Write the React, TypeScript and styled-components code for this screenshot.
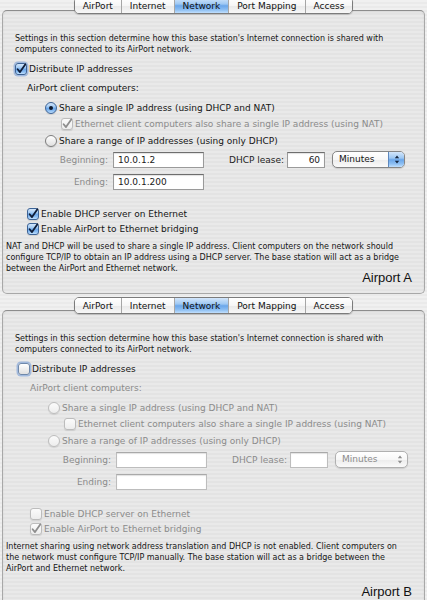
import React from "react";
import styled, { createGlobalStyle } from "styled-components";

const TABS = ["AirPort", "Internet", "Network", "Port Mapping", "Access"];
const ACTIVE_TAB = "Network";

const INTRO = [
  "Settings in this section determine how this base station's Internet connection is shared with",
  "computers connected to its AirPort network.",
];

type PanelData = {
  caption: string;
  tabsTop: number;
  nudge: number;
  captionTop: number;
  on: boolean;
  ethernetNat: boolean;
  beginning: string;
  ending: string;
  lease: string;
  dhcpServer: boolean;
  bridging: boolean;
  note: string[];
};

const PANELS: PanelData[] = [
  {
    caption: "Airport A",
    tabsTop: -3,
    nudge: 0,
    captionTop: -4,
    on: true,
    ethernetNat: true,
    beginning: "10.0.1.2",
    ending: "10.0.1.200",
    lease: "60",
    dhcpServer: true,
    bridging: true,
    note: [
      "NAT and DHCP will be used to share a single IP address. Client computers on the network should",
      "configure TCP/IP to obtain an IP address using a DHCP server. The base station will act as a bridge",
      "between the AirPort and Ethernet network.",
    ],
  },
  {
    caption: "Airport B",
    tabsTop: 3,
    nudge: 3,
    captionTop: 10,
    on: false,
    ethernetNat: false,
    beginning: "",
    ending: "",
    lease: "",
    dhcpServer: false,
    bridging: true,
    note: [
      "Internet sharing using network address translation and DHCP is not enabled. Client computers on",
      "the network must configure TCP/IP manually. The base station will act as a bridge between the",
      "AirPort and Ethernet network.",
    ],
  },
];

const AQUA =
  "linear-gradient(#d3e6fb 0%, #9ec8f3 40%, #6aa6ea 52%, #8fc0f3 80%, #c2e0fd 100%)";

const GlobalStyle = createGlobalStyle`
  html, body {
    margin: 0;
    padding: 0;
  }
  body {
    background: repeating-linear-gradient(#f0f0f0 0 2px, #eaeaea 2px 4px);
    font-family: "DejaVu Sans", "Liberation Sans", sans-serif;
    color: #151515;
  }
`;

const Page = styled.div`
  display: flex;
  flex-direction: column;
  width: 427px;
  height: 600px;
  overflow: hidden;
`;

const Section = styled.section`
  display: flex;
  flex-direction: column;
`;

const TabBar = styled.div<{ $top: number }>`
  position: relative;
  z-index: 1;
  align-self: center;
  display: flex;
  box-sizing: border-box;
  height: 17px;
  margin-top: ${(p) => p.$top}px;
  border: 1px solid #7b7b7b;
  border-radius: 5px;
  overflow: hidden;
  box-shadow: 0 1px 1px rgba(0, 0, 0, 0.18);
`;

const Tab = styled.div<{ $active?: boolean }>`
  display: flex;
  align-items: center;
  padding: 0 8px;
  font-size: 9px;
  color: #111;
  white-space: nowrap;
  background: ${(p) =>
    p.$active
      ? AQUA
      : "linear-gradient(#ffffff 0%, #f6f6f6 50%, #e9e9e9 52%, #f7f7f7 100%)"};
  & + & {
    border-left: 1px solid #a6a6a6;
  }
`;

const Frame = styled.div`
  display: flex;
  flex-direction: column;
  margin: -4px 2px 0;
  padding: 22px 0 8px;
  border: 1px solid #a8a8a8;
  border-top-color: #8c8c8c;
  border-radius: 5px;
  background: repeating-linear-gradient(#e9e9e9 0 2px, #e3e3e3 2px 4px);
  box-shadow: inset 0 1px 2px rgba(0, 0, 0, 0.08);
`;

const Text = styled.div<{ $indent: number; $top?: number }>`
  display: flex;
  flex-direction: column;
  align-items: flex-start;
  margin: ${(p) => p.$top ?? 0}px 0 0 ${(p) => p.$indent}px;
  font-size: 8px;
  line-height: 11px;
  color: #161616;
`;

const Line = styled.span`
  white-space: nowrap;
`;

const Row = styled.div<{ $indent: number; $top: number; $dim?: boolean }>`
  display: flex;
  align-items: center;
  gap: 2px;
  height: 14px;
  margin: ${(p) => p.$top}px 0 0 ${(p) => p.$indent}px;
  font-size: 9px;
  white-space: nowrap;
  color: ${(p) => (p.$dim ? "#8b8b8b" : "#151515")};
`;

const FieldRow = styled.div<{ $indent: number; $top: number }>`
  display: flex;
  align-items: center;
  height: 17px;
  margin: ${(p) => p.$top}px 0 0 ${(p) => p.$indent}px;
  font-size: 9px;
  white-space: nowrap;
`;

const FieldLabel = styled.span<{ $dim?: boolean; $w?: number; $gap: number }>`
  ${(p) => (p.$w ? `width: ${p.$w}px; text-align: right;` : "")}
  margin-right: ${(p) => p.$gap}px;
  color: ${(p) => (p.$dim ? "#8b8b8b" : "#1d1d1d")};
`;

const Input = styled.div<{ $w: number; $right?: boolean; $off?: boolean }>`
  box-sizing: border-box;
  width: ${(p) => p.$w}px;
  height: 16px;
  padding: 0 4px;
  line-height: 14px;
  text-align: ${(p) => (p.$right ? "right" : "left")};
  color: #202020;
  background: #fff;
  border: 1px solid ${(p) => (p.$off ? "#bdbdbd" : "#9a9a9a")};
  border-top-color: ${(p) => (p.$off ? "#a9a9a9" : "#6e6e6e")};
  box-shadow: inset 0 1px 1px rgba(0, 0, 0, 0.12);
`;

const Spacer = styled.span<{ $w: number }>`
  width: ${(p) => p.$w}px;
  flex: none;
`;

const Popup = styled.div<{ $off?: boolean }>`
  display: flex;
  box-sizing: border-box;
  width: 73px;
  height: 17px;
  margin-left: 7px;
  border: 1px solid ${(p) => (p.$off ? "#b0b0b0" : "#858585")};
  border-radius: 5px;
  overflow: hidden;
  background: linear-gradient(#ffffff 0%, #f7f7f7 50%, #ececec 52%, #fafafa 100%);
  box-shadow: 0 1px 1px rgba(0, 0, 0, 0.12);
`;

const PopupText = styled.span<{ $off?: boolean }>`
  flex: 1;
  padding-left: 6px;
  line-height: 15px;
  color: ${(p) => (p.$off ? "#8b8b8b" : "#151515")};
`;

const PopupArrows = styled.span<{ $off?: boolean }>`
  display: flex;
  align-items: center;
  justify-content: center;
  width: 15px;
  background: ${(p) => (p.$off ? "transparent" : AQUA)};
  border-left: 1px solid ${(p) => (p.$off ? "transparent" : "#5d87bd")};
`;

const Box = styled.span<{ $on: boolean; $off?: boolean; $focus?: boolean }>`
  flex: none;
  display: inline-flex;
  align-items: center;
  justify-content: center;
  box-sizing: border-box;
  width: 12px;
  height: 12px;
  border-radius: 3px;
  border: 1px solid
    ${(p) => (p.$off ? "#bcbcbc" : p.$on ? "#3c6396" : p.$focus ? "#6f88aa" : "#7d7d7d")};
  background: ${(p) =>
    p.$off
      ? "linear-gradient(#fbfbfb, #ededed)"
      : p.$on
      ? AQUA
      : "linear-gradient(#ffffff, #e0e0e0)"};
  box-shadow: ${(p) =>
    p.$focus ? "0 0 0 1.5px rgba(105, 150, 215, 0.55)" : "0 1px 1px rgba(0,0,0,0.1)"};
  svg {
    overflow: visible;
  }
`;

const Dial = styled.span<{ $on: boolean; $off?: boolean }>`
  flex: none;
  display: inline-flex;
  align-items: center;
  justify-content: center;
  box-sizing: border-box;
  width: 12px;
  height: 12px;
  border-radius: 50%;
  border: 1px solid ${(p) => (p.$off ? "#bdbdbd" : p.$on ? "#3c6396" : "#7d7d7d")};
  background: ${(p) =>
    p.$off
      ? "linear-gradient(#fbfbfb, #ededed)"
      : p.$on
      ? AQUA
      : "linear-gradient(#ffffff, #e0e0e0)"};
  box-shadow: 0 1px 1px rgba(0, 0, 0, 0.1);
`;

const Dot = styled.span`
  width: 4px;
  height: 4px;
  border-radius: 50%;
  background: #0f1a2e;
`;

const Caption = styled.div<{ $top: number }>`
  align-self: flex-end;
  margin: ${(p) => p.$top}px 12px 0 0;
  font-family: "Liberation Sans", Arial, sans-serif;
  font-size: 13px;
  line-height: 15px;
  color: #111;
`;

const Check = ({
  checked,
  disabled,
  focus,
}: {
  checked: boolean;
  disabled?: boolean;
  focus?: boolean;
}) => (
  <Box $on={checked && !disabled} $off={disabled} $focus={focus}>
    {checked && (
      <svg width="10" height="10" viewBox="0 0 10 10">
        <path
          d="M1.6 5.2 L4 8.1 L9.4 0.2"
          fill="none"
          stroke={disabled ? "#8e8e8e" : "#0f1d38"}
          strokeWidth="1.8"
          strokeLinecap="round"
          strokeLinejoin="round"
        />
      </svg>
    )}
  </Box>
);

const Radio = ({ selected, disabled }: { selected: boolean; disabled?: boolean }) => (
  <Dial $on={selected && !disabled} $off={disabled}>
    {selected && <Dot />}
  </Dial>
);

const Arrows = ({ off }: { off?: boolean }) => (
  <svg width="6" height="11" viewBox="0 0 6 11">
    <path d="M0.8 4.3 L3 1.4 L5.2 4.3 Z M0.8 6.7 L3 9.6 L5.2 6.7 Z" fill={off ? "#8e8e8e" : "#152640"} />
  </svg>
);

const Panel = ({ p }: { p: PanelData }) => {
  const n = p.nudge;
  const off = !p.on;
  return (
    <Section>
      <TabBar $top={p.tabsTop}>
        {TABS.map((t) => (
          <Tab key={t} $active={t === ACTIVE_TAB}>
            {t}
          </Tab>
        ))}
      </TabBar>
      <Frame>
        <Text $indent={12}>
          {INTRO.map((l) => (
            <Line key={l}>{l}</Line>
          ))}
        </Text>

        <Row $indent={12 + n} $top={7}>
          <Check checked={p.on} focus />
          Distribute IP addresses
        </Row>
        <Row $indent={24 + n} $top={5} $dim={off}>
          AirPort client computers:
        </Row>
        <Row $indent={42 + n} $top={6} $dim={off}>
          <Radio selected={p.on} disabled={off} />
          Share a single IP address (using DHCP and NAT)
        </Row>
        <Row $indent={58 + n} $top={2} $dim>
          <Check checked={p.ethernetNat} disabled />
          Ethernet client computers also share a single IP address (using NAT)
        </Row>
        <Row $indent={42 + n} $top={3} $dim={off}>
          <Radio selected={false} disabled={off} />
          Share a range of IP addresses (using only DHCP)
        </Row>

        <FieldRow $indent={40 + n} $top={3}>
          <FieldLabel $w={65} $gap={5} $dim>
            Beginning:
          </FieldLabel>
          <Input $w={91} $off={off}>{p.beginning}</Input>
          <Spacer $w={25} />
          <FieldLabel $gap={3} $dim={off}>
            DHCP lease:
          </FieldLabel>
          <Input $w={38} $right $off={off}>{p.lease}</Input>
          <Popup $off={off}>
            <PopupText $off={off}>Minutes</PopupText>
            <PopupArrows $off={off}>
              <Arrows off={off} />
            </PopupArrows>
          </Popup>
        </FieldRow>
        <FieldRow $indent={40 + n} $top={5}>
          <FieldLabel $w={65} $gap={5} $dim>
            Ending:
          </FieldLabel>
          <Input $w={91} $off={off}>{p.ending}</Input>
        </FieldRow>

        <Row $indent={24 + n} $top={17} $dim={off}>
          <Check checked={p.dhcpServer} disabled={off} />
          Enable DHCP server on Ethernet
        </Row>
        <Row $indent={24 + n} $top={1} $dim={off}>
          <Check checked={p.bridging} disabled={off} />
          Enable AirPort to Ethernet bridging
        </Row>

        <Text $indent={3} $top={5}>
          {p.note.map((l) => (
            <Line key={l}>{l}</Line>
          ))}
        </Text>
        <Caption $top={p.captionTop}>{p.caption}</Caption>
      </Frame>
    </Section>
  );
};

export default function App() {
  return (
    <Page>
      <GlobalStyle />
      {PANELS.map((p) => (
        <Panel key={p.caption} p={p} />
      ))}
    </Page>
  );
}
